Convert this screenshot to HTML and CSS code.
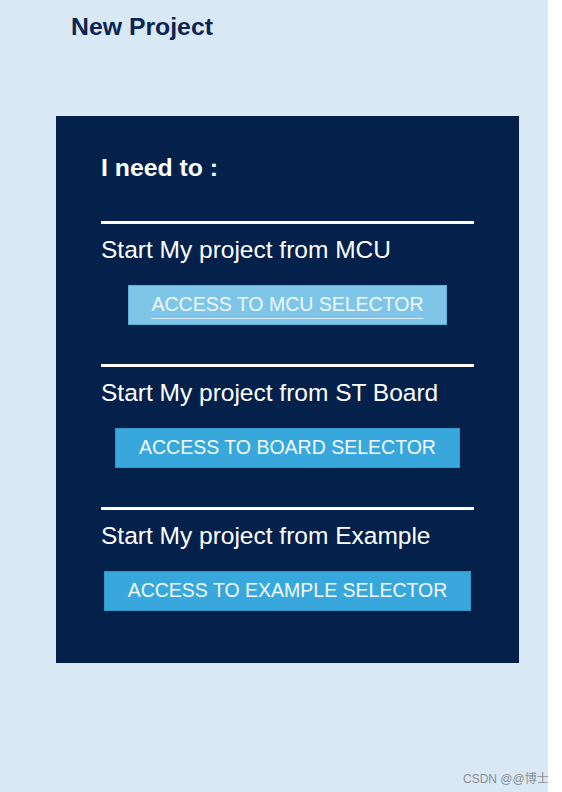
FILE: index.html
```html
<!DOCTYPE html>
<html>
<head>
<meta charset="utf-8">
<link rel="stylesheet" href="styles.css">
</head>
<body>
<div class="page">
  <h1 class="title">New Project</h1>
  <div class="panel">
    <div class="heading">I need to :</div>
    <div class="section">
      <div class="sep"></div>
      <div class="label">Start My project from MCU</div>
      <div class="btn btn-hover"><span class="btn-text">ACCESS TO MCU SELECTOR</span></div>
    </div>
    <div class="section">
      <div class="sep"></div>
      <div class="label">Start My project from ST Board</div>
      <div class="btn"><span class="btn-text">ACCESS TO BOARD SELECTOR</span></div>
    </div>
    <div class="section">
      <div class="sep"></div>
      <div class="label">Start My project from Example</div>
      <div class="btn"><span class="btn-text">ACCESS TO EXAMPLE SELECTOR</span></div>
    </div>
  </div>
  <div class="watermark">CSDN @@博士</div>
</div>
</body>
</html>
```
FILE: styles.css
```css
html, body {
  margin: 0;
  padding: 0;
  background: #ffffff;
}
body {
  font-family: "Liberation Sans", Arial, "Noto Sans CJK SC", sans-serif;
}
.page {
  position: relative;
  width: 548px;
  height: 792px;
  background: #d9e8f5;
  padding-top: 13px;
  box-sizing: border-box;
  overflow: hidden;
}
.title {
  margin: 0 0 0 71px;
  font-size: 24.8px;
  line-height: 28px;
  font-weight: bold;
  color: #0b2550;
}
.panel {
  margin: 75px 0 0 56px;
  width: 463px;
  height: 547px;
  box-sizing: border-box;
  background: #03214a;
  padding: 38px 45px 0 45px;
  display: flex;
  flex-direction: column;
}
.heading {
  font-size: 24.8px;
  line-height: 28px;
  font-weight: bold;
  color: #ffffff;
}
.section {
  display: flex;
  flex-direction: column;
  margin-top: 39px;
}
.sep {
  height: 3px;
  background: #ffffff;
}
.label {
  margin-top: 12px;
  font-size: 24.5px;
  line-height: 28px;
  color: #ffffff;
}
.section:first-of-type .label {
  margin-top: 11px;
}
.btn {
  align-self: center;
  margin-top: 21px;
  height: 40px;
  box-sizing: border-box;
  padding: 0 23px 2px;
  display: flex;
  align-items: center;
  background: #38a8dc;
  border: 1px solid #2f96c8;
  font-size: 19.5px;
  line-height: 22px;
  color: #f2f8fc;
  white-space: nowrap;
}
.btn-hover {
  background: #7ec5e8;
  border-color: #5fb0da;
}
.btn-hover .btn-text {
  color: #eef7fc;
  text-decoration: underline;
  text-decoration-color: #d8eef9;
  text-decoration-thickness: 1px;
  text-underline-offset: 7px;
}
.watermark {
  position: absolute;
  left: 463px;
  top: 769px;
  font-size: 12px;
  color: #8a8f95;
  white-space: nowrap;
}
```
